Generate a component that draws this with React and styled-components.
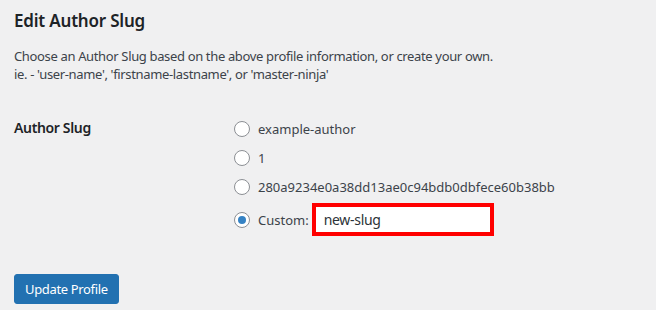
import { useState } from "react";
import styled, { createGlobalStyle } from "styled-components";

const GlobalStyle = createGlobalStyle`
  body {
    margin: 0;
    background: #f0f0f1;
    color: #3c434a;
    font-family: "Noto Sans", "Open Sans", sans-serif;
    font-size: 13px;
    letter-spacing: -0.35px;
  }
`;

const Page = styled.div`
  padding: 0 14px;
  width: 656px;
  height: 310px;
  box-sizing: border-box;
  overflow: hidden;
`;

const Title = styled.h2`
  margin: 0;
  padding-top: 9px;
  font-size: 17px;
  font-weight: 600;
  line-height: 24px;
  color: #1d2327;
  letter-spacing: -0.2px;
`;

const Description = styled.p`
  margin: 14px 0 0;
  line-height: 18px;
  font-size: 13px;
`;

const FormRow = styled.div`
  display: grid;
  grid-template-columns: 220px 1fr;
  margin-top: 26px;
`;

const Label = styled.div`
  font-size: 14px;
  font-weight: 600;
  color: #1d2327;
  line-height: 20px;
  padding-top: 9px;
`;

const Options = styled.div`
  display: flex;
  flex-direction: column;
  gap: 9px;
  padding-top: 10px;
  letter-spacing: 0;
`;

const Option = styled.label`
  display: flex;
  align-items: center;
  gap: 8px;
  min-height: 20px;
  line-height: 20px;
  cursor: pointer;
  margin-top: ${(p) => (p.$tight ? "-3px" : "0")};
`;

const Radio = styled.span`
  box-sizing: border-box;
  width: 16px;
  height: 16px;
  border-radius: 50%;
  border: 1px solid #8c8f94;
  background: #fff;
  display: flex;
  align-items: center;
  justify-content: center;
  flex-shrink: 0;

  &::after {
    content: "";
    width: 8px;
    height: 8px;
    border-radius: 50%;
    background: ${(p) => (p.$checked ? "#3582c4" : "transparent")};
  }
`;

const SlugInput = styled.input`
  box-sizing: border-box;
  width: 182px;
  height: 33px;
  border: 4px solid #ff0000;
  background: #fff;
  padding: 0 8px;
  margin-left: -5px;
  font-family: inherit;
  font-size: 14px;
  letter-spacing: -0.3px;
  color: #2c3338;
  outline: none;
`;

const Button = styled.button`
  margin-top: 38px;
  background: #2271b1;
  border: 1px solid #2271b1;
  border-radius: 3px;
  color: #fff;
  font-family: inherit;
  font-size: 13px;
  letter-spacing: -0.35px;
  height: 30px;
  padding: 0 10px;
  cursor: pointer;
`;

const choices = [
  "example-author",
  "1",
  "280a9234e0a38dd13ae0c94bdb0dbfece60b38bb",
];

export default function App() {
  const [selected, setSelected] = useState("custom");
  const [slug, setSlug] = useState("new-slug");

  return (
    <Page>
      <GlobalStyle />
      <Title>Edit Author Slug</Title>
      <Description>
        Choose an Author Slug based on the above profile information, or create
        your own.
        <br />
        ie. - 'user-name', 'firstname-lastname', or 'master-ninja'
      </Description>
      <FormRow>
        <Label>Author Slug</Label>
        <Options>
          {choices.map((c) => (
            <Option key={c} onClick={() => setSelected(c)}>
              <Radio $checked={selected === c} />
              {c}
            </Option>
          ))}
          <Option $tight onClick={() => setSelected("custom")}>
            <Radio $checked={selected === "custom"} />
            Custom:
            <SlugInput
              value={slug}
              onChange={(e) => setSlug(e.target.value)}
            />
          </Option>
        </Options>
      </FormRow>
      <Button>Update Profile</Button>
    </Page>
  );
}
